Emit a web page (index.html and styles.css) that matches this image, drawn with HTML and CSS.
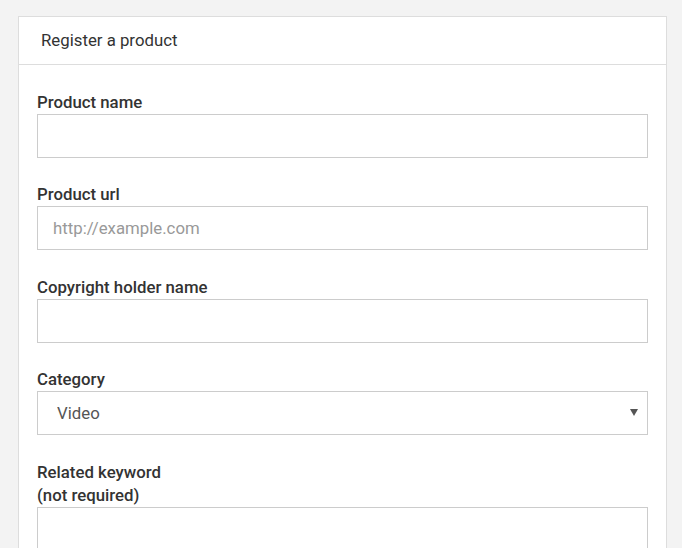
FILE: index.html
```html
<!DOCTYPE html>
<html lang="en">
<head>
<meta charset="utf-8">
<title>Register a product</title>
<link rel="stylesheet" href="styles.css">
</head>
<body>
<div class="card">
  <div class="card-header">Register a product</div>
  <form class="card-body">
    <div class="field">
      <label class="label" for="name">Product name</label>
      <input class="control" id="name" type="text">
    </div>
    <div class="field">
      <label class="label" for="url">Product url</label>
      <input class="control" id="url" type="text" placeholder="http://example.com">
    </div>
    <div class="field">
      <label class="label" for="holder">Copyright holder name</label>
      <input class="control" id="holder" type="text">
    </div>
    <div class="field">
      <label class="label" for="cat">Category</label>
      <div class="select-wrap">
        <select class="control select" id="cat">
          <option>Video</option>
        </select>
        <svg class="caret" width="8" height="7" viewBox="0 0 8 7"><path d="M0 0H8L4 7Z" fill="#555"/></svg>
      </div>
    </div>
    <div class="field">
      <label class="label" for="kw">Related keyword<br>(not required)</label>
      <textarea class="control area" id="kw"></textarea>
    </div>
  </form>
</div>
</body>
</html>
```
FILE: styles.css
```css
html, body {
  margin: 0;
  padding: 0;
  background: #f3f3f3;
  font-family: Roboto, "Liberation Sans", sans-serif;
  color: #333;
}
.card {
  width: 647px;
  margin: 16px 0 0 18px;
  background: #fff;
  border: 1px solid #ddd;
}
.card-header {
  height: 47px;
  line-height: 47px;
  padding-left: 22px;
  font-size: 16.8px;
  color: #333;
  border-bottom: 1px solid #ddd;
}
.card-body {
  display: flex;
  flex-direction: column;
  gap: 25.4px;
  padding: 26px 18px 40px;
}
.field {
  display: flex;
  flex-direction: column;
}
.label {
  font-size: 16.8px;
  line-height: 23px;
  font-weight: 500;
  color: #333;
}
.control {
  box-sizing: border-box;
  width: 100%;
  height: 44px;
  margin: 0;
  border: 1px solid #ccc;
  border-radius: 0;
  background: #fff;
  padding: 0 15px;
  font-family: Roboto, "Liberation Sans", sans-serif;
  font-size: 16.8px;
  color: #555;
  outline: none;
}
.control::placeholder {
  color: #999;
}
.select-wrap {
  position: relative;
}
.select {
  appearance: none;
  -webkit-appearance: none;
  padding-left: 19px;
  color: #555;
}
.caret {
  position: absolute;
  right: 10px;
  top: 18px;
}
.area {
  height: 90px;
  resize: none;
  display: block;
}
```
